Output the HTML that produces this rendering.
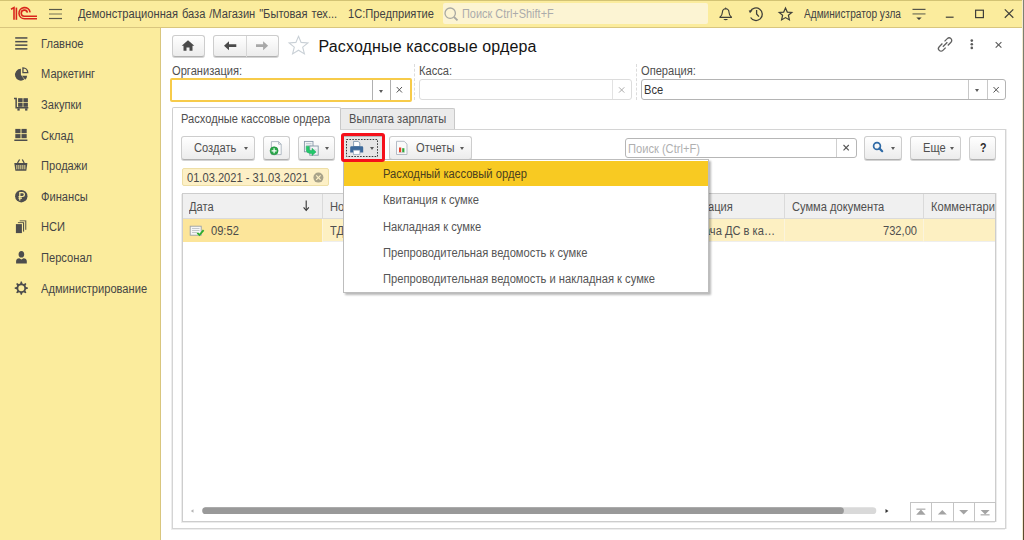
<!DOCTYPE html>
<html><head><meta charset="utf-8">
<style>
*{margin:0;padding:0;box-sizing:border-box}
html,body{width:1024px;height:540px;overflow:hidden;background:#fff;font-family:"Liberation Sans",sans-serif;font-size:11px;color:#4f4f4f}
.a{position:absolute}
.t{position:absolute;white-space:nowrap;line-height:14px;height:14px;font-size:12.5px;transform:scaleX(0.89);transform-origin:0 0}
svg{position:absolute;overflow:visible}
#hdr{position:absolute;left:0;top:0;width:1024px;height:28px;background:#fbec9d;border-bottom:1px solid #d9c67e;border-top:1px solid #d3c374}
#side{position:absolute;left:0;top:28px;width:161px;height:512px;background:#fbec9d;border-right:1px solid #d9c67e}
#redge{position:absolute;left:1022px;top:0;width:2px;height:540px;background:linear-gradient(90deg,#f4ead0 0 1px,transparent 1px),linear-gradient(#7d8274,#6f6a55 50%,#5a4a2e)}
.btn{position:absolute;border:1px solid #cdcdcd;border-bottom-color:#b0b0b0;border-radius:3px;background:linear-gradient(#ffffff,#ececec);box-shadow:0 1px 0.5px #d4d4d4}
.inp{position:absolute;border:1px solid #c4c4c4;border-radius:3px;background:#fff}
.vs{position:absolute;width:1px;background:#d4d4d4}
.dd{position:absolute;width:0;height:0;border-left:2.5px solid transparent;border-right:2.5px solid transparent;border-top:3px solid #5a5a5a}
.si{left:41px;color:#454545}
.hd{color:#424242}
.mi{left:383px;color:#555;transform:scaleX(0.895)}
</style></head><body>

<!-- ===== HEADER ===== -->
<div id="hdr"></div>
<!-- 1C logo -->
<svg style="left:0;top:0" width="40" height="28" viewBox="0 0 40 28">
  <g fill="none" stroke="#d9261c" stroke-width="1.6">
    <path d="M11 9.2 L14 7.6 L14 19.8"/>
    <path d="M16.4 7.6 L16.4 19.8"/>
    <path d="M30.1 12.3 A5.6 5.6 0 1 0 24.6 18.8 L37 18.8"/>
    <path d="M27.4 12.6 A3.1 3.1 0 1 0 24.5 16.3 L37 16.3"/>
  </g>
</svg>
<!-- hamburger -->
<svg style="left:0;top:0" width="70" height="28">
  <g stroke="#5a5a4a" stroke-width="1.2"><line x1="49" y1="9.5" x2="62" y2="9.5"/><line x1="49" y1="14" x2="62" y2="14" stroke="#8a8660"/><line x1="49" y1="18.5" x2="62" y2="18.5"/></g>
</svg>
<div class="t hd" style="left:78px;top:7.2px;word-spacing:0.9px">Демонстрационная база /Магазин "Бытовая тех...</div>
<div class="t hd" style="left:347.5px;top:7.2px">1С:Предприятие</div>
<div class="a" style="left:443px;top:3px;width:265px;height:21px;background:#fcf4d3;border-radius:2px"></div>
<svg style="left:0;top:0" width="470" height="28">
  <g fill="none" stroke="#a9a9a2" stroke-width="1.3"><circle cx="450.2" cy="13.2" r="5.2"/><line x1="454" y1="17" x2="457.5" y2="20.3" stroke-width="1.8"/></g>
</svg>
<div class="t" style="left:461.5px;top:7.2px;color:#ababab;transform:scaleX(0.875)">Поиск Ctrl+Shift+F</div>
<!-- bell -->
<svg style="left:0;top:0" width="800" height="28">
  <path d="M719.9 17.3 L731.5 17.3 Q729.1 15.2 729 12.2 Q728.9 8.9 725.7 8.7 Q722.5 8.9 722.4 12.2 Q722.3 15.2 719.9 17.3 Z" fill="none" stroke="#3f3f3a" stroke-width="1.15" stroke-linejoin="round"/>
  <path d="M723.3 18.9 L728.1 18.9 Q725.7 21.8 723.3 18.9 Z" fill="#3f3f3a"/>
  <path d="M724.6 8.8 L725.7 7.3 L726.8 8.8 Z" fill="#3f3f3a"/>
  <!-- history -->
  <g fill="none" stroke="#3f3f3a" stroke-width="1.3">
    <path d="M750.3 11.5 A6.3 6.3 0 1 1 750.6 17.5"/>
    <path d="M756.6 10 L756.6 14 L758.9 16.7"/>
  </g>
  <path d="M748.7 10.4 L752.6 10.2 L750 13.3 Z" fill="#3f3f3a"/>
  <!-- star -->
  <path d="M785.5 8 L787.3 12.1 L791.8 12.5 L788.4 15.3 L789.4 19.9 L785.5 17.6 L781.6 19.9 L782.6 15.3 L779.2 12.5 L783.7 12.1 Z" fill="none" stroke="#3f3f3a" stroke-width="1.2" stroke-linejoin="miter"/>
</svg>
<div class="t hd" style="left:804px;top:7.2px;transform:scaleX(0.81)">Администратор узла</div>
<svg style="left:0;top:0" width="1024" height="28">
  <g stroke="#55554a" stroke-width="1.2"><line x1="912.5" y1="9.4" x2="925.5" y2="9.4"/><line x1="912.5" y1="13.9" x2="925.5" y2="13.9" stroke="#8c8a66" stroke-width="1.5"/></g>
  <path d="M916.3 17.6 L921.7 17.6 L919 20 Z" fill="#3f3f3a"/>
  <line x1="945.8" y1="17.2" x2="953.6" y2="17.2" stroke="#3f3f3a" stroke-width="1.2"/>
  <rect x="975.6" y="10.2" width="7.8" height="7.4" fill="none" stroke="#3f3f3a" stroke-width="1.2"/>
  <g stroke="#3f3f3a" stroke-width="1.2"><line x1="1004.8" y1="9.4" x2="1013.3" y2="17.7"/><line x1="1013.3" y1="9.4" x2="1004.8" y2="17.7"/></g>
</svg>

<!-- ===== SIDEBAR ===== -->
<div id="side"></div>
<div id="redge"></div>
<svg style="left:0;top:0" width="40" height="300">
  <g fill="#4d4d4d">
    <!-- Главное -->
    <rect x="15.2" y="37.2" width="12.2" height="1.5"/><rect x="15.2" y="40.9" width="12.2" height="1.5"/><rect x="15.2" y="44.4" width="12.2" height="1.5"/><rect x="15.2" y="48.1" width="12.2" height="1.5"/>
    <!-- Маркетинг -->
    <path d="M20.9 74.7 L20.90 68.80 A5.9 5.9 0 1 0 24.28 79.53 Z"/>
    <path d="M22.95 72.65 L22.95 67.80 A5 5 0 0 1 27.80 72.65 Z" fill="none" stroke="#4d4d4d" stroke-width="1.3"/>
    <path d="M21.9 75.7 L27.10 75.70 A5.2 5.2 0 0 1 25.24 79.68 Z"/>
    <!-- Закупки -->
    <path d="M14 97.8 L16.9 97.8 L16.9 107 L28.3 107 L28.3 108.5 L15.4 108.5 L15.4 99.3 L14 99.3 Z"/>
    <rect x="18.1" y="98.2" width="4.5" height="4.1"/><rect x="23.4" y="98.2" width="4.5" height="4.1"/>
    <rect x="18.1" y="103" width="4.5" height="3.8"/><rect x="23.4" y="103" width="4.5" height="3.8"/>
    <rect x="17.4" y="108.3" width="2.3" height="2.3"/><rect x="25.1" y="108.3" width="2.3" height="2.3"/>
    <!-- Склад -->
    <rect x="15.3" y="128.9" width="5.2" height="4.3"/><rect x="21.5" y="128.9" width="5.2" height="4.3"/>
    <rect x="15.3" y="134.1" width="5.2" height="4.1"/><rect x="21.5" y="134.1" width="5.2" height="4.1"/>
    <rect x="14.3" y="139.5" width="13.1" height="1.5"/>
    <!-- Продажи -->
    <path d="M14.3 163 L27.4 163 L26.3 170.8 L15.4 170.8 Z"/>
    <path d="M17.5 163 L19.6 159.5 M24.2 163 L22.3 159.5" stroke="#4d4d4d" stroke-width="1.3" fill="none"/>
    <g fill="#fbec9d"><rect x="16.4" y="165" width="0.9" height="4.3"/><rect x="18.4" y="165" width="0.9" height="4.3"/><rect x="20.4" y="165" width="0.9" height="4.3"/><rect x="22.4" y="165" width="0.9" height="4.3"/><rect x="24.4" y="165" width="0.9" height="4.3"/></g>
    <!-- Финансы -->
    <circle cx="21.3" cy="196.2" r="6.2"/>
    <path d="M19.8 200.6 L19.8 192.7 L22.4 192.7 Q24.4 192.7 24.4 194.6 Q24.4 196.5 22.4 196.5 L18.5 196.5 M18.5 198.2 L22 198.2" fill="none" stroke="#fbec9d" stroke-width="1.2"/>
    <!-- НСИ -->
    <rect x="19.7" y="220.4" width="6.6" height="9.4" fill="#5f5d4e"/>
    <rect x="18.7" y="221.3" width="6.5" height="10" fill="#fbec9d"/>
    <rect x="17.9" y="222.2" width="6.2" height="9.4" fill="#55544a"/>
    <rect x="16.9" y="223.1" width="6.1" height="10" fill="#fbec9d"/>
    <rect x="15.9" y="224.1" width="6" height="9"/>
    <!-- Персонал -->
    <path d="M18.6 254.5 Q18.6 251 21.4 251 Q24.2 251 24.2 254.5 Q24.2 257.6 21.4 257.6 Q18.6 257.6 18.6 254.5 Z"/>
    <path d="M16.1 263.5 L16.1 261 Q16.3 258.6 19.3 258.3 L21.4 259.6 L23.5 258.3 Q26.6 258.6 26.8 261 L26.8 263.5 Z"/>
    <!-- Администрирование -->
    <g transform="translate(21.3 288.2)">
      <circle r="3.9" fill="none" stroke="#4d4d4d" stroke-width="1.8"/>
      <path d="M3.80 1.40 L6.60 0.60 L6.60 -0.60 L3.80 -1.40 Z M1.70 3.68 L4.24 5.09 L5.09 4.24 L3.68 1.70 Z M-1.40 3.80 L-0.60 6.60 L0.60 6.60 L1.40 3.80 Z M-3.68 1.70 L-5.09 4.24 L-4.24 5.09 L-1.70 3.68 Z M-3.80 -1.40 L-6.60 -0.60 L-6.60 0.60 L-3.80 1.40 Z M-1.70 -3.68 L-4.24 -5.09 L-5.09 -4.24 L-3.68 -1.70 Z M1.40 -3.80 L0.60 -6.60 L-0.60 -6.60 L-1.40 -3.80 Z M3.68 -1.70 L5.09 -4.24 L4.24 -5.09 L1.70 -3.68 Z" fill="#4d4d4d"/>
    </g>
  </g>
</svg>
<div class="t si" style="top:36.90px">Главное</div>
<div class="t si" style="top:67.47px">Маркетинг</div>
<div class="t si" style="top:98.05px">Закупки</div>
<div class="t si" style="top:128.62px">Склад</div>
<div class="t si" style="top:159.20px">Продажи</div>
<div class="t si" style="top:189.78px">Финансы</div>
<div class="t si" style="top:220.35px">НСИ</div>
<div class="t si" style="top:250.93px">Персонал</div>
<div class="t si" style="top:281.50px">Администрирование</div>


<!-- ===== MAIN ===== -->
<!-- home button -->
<div class="btn" style="left:172px;top:35px;width:33px;height:22px"></div>
<svg style="left:0;top:0" width="320" height="60">
  <path d="M188 40.2 L194.3 45.8 L192.5 45.8 L192.5 50.8 L189.5 50.8 L189.5 47.6 L186.5 47.6 L186.5 50.8 L183.5 50.8 L183.5 45.8 L181.7 45.8 Z" fill="#4a4a4a"/>
</svg>
<!-- back/forward -->
<div class="btn" style="left:213px;top:35px;width:66px;height:22px"></div>
<div class="vs" style="left:246px;top:36px;height:21px;background:#d6d6d6"></div>
<svg style="left:0;top:0" width="320" height="60">
  <path d="M224 45.7 L229 41.2 L229 44.3 L236.3 44.3 L236.3 47.1 L229 47.1 L229 50.2 Z" fill="#4a4a4a"/>
  <path d="M268.1 45.7 L263.1 41.2 L263.1 44.3 L256 44.3 L256 47.1 L263.1 47.1 L263.1 50.2 Z" fill="#a8a8a8"/>
  <path d="M298.5 36.3 L301.1 42.4 L307.9 42.9 L302.7 47.2 L304.4 53.9 L298.5 50.2 L292.6 53.9 L294.3 47.2 L289.1 42.9 L295.9 42.4 Z" fill="none" stroke="#c9d0d6" stroke-width="1.1"/>
</svg>
<div class="t" style="left:318.5px;top:37.5px;font-size:16px;line-height:18px;height:18px;color:#141414;letter-spacing:0.14px;transform:none">Расходные кассовые ордера</div>
<svg style="left:0;top:0" width="1024" height="60">
  <g transform="translate(945.1 44.5) rotate(-45)" fill="none" stroke="#606060" stroke-width="1.3">
    <path d="M-1.2 -2.6 L-5.7 -2.6 A2.6 2.6 0 0 0 -5.7 2.6 L-1.8 2.6"/>
    <path d="M1.8 -2.6 L5.7 -2.6 A2.6 2.6 0 0 1 5.7 2.6 L1.2 2.6"/>
    <line x1="-3.2" y1="0" x2="3.2" y2="0"/>
  </g>
  <g fill="#5a5a5a"><circle cx="971.8" cy="40.6" r="1.3"/><circle cx="971.8" cy="44.2" r="1.3"/><circle cx="971.8" cy="47.9" r="1.3"/></g>
  <g stroke="#5a5a5a" stroke-width="1.1"><line x1="995.7" y1="42.2" x2="1001.4" y2="47.7"/><line x1="1001.4" y1="42.2" x2="995.7" y2="47.7"/></g>
</svg>

<!-- labels -->
<div class="t" style="left:172px;top:63.5px">Организация:</div>
<div class="t" style="left:419px;top:63.5px">Касса:</div>
<div class="t" style="left:641px;top:63.5px">Операция:</div>
<!-- dashed separators -->
<div class="a" style="left:414px;top:64px;width:1px;height:36px;border-left:1px dashed #dcdcdc"></div>
<div class="a" style="left:636px;top:64px;width:1px;height:36px;border-left:1px dashed #dcdcdc"></div>
<!-- org input (focused) -->
<div class="a" style="left:170px;top:78px;width:242px;height:24px;border:2px solid #f7cb4a;border-radius:2px;background:#fff"></div>
<div class="vs" style="left:372px;top:80px;height:20px;background:#b0b0b0"></div>
<div class="vs" style="left:390px;top:80px;height:20px;background:#b0b0b0"></div>
<div class="dd" style="left:378.5px;top:89.5px"></div>

<!-- kassa input -->
<div class="inp" style="left:419px;top:79px;width:213px;height:21px;border-color:#dcdcdc"></div>
<div class="vs" style="left:612px;top:80px;height:19px;background:#e2e2e2"></div>
<!-- operation input -->
<div class="inp" style="left:641px;top:79px;width:365px;height:21px;border-color:#b4b4b4"></div>
<div class="vs" style="left:968px;top:80px;height:19px;background:#c8c8c8"></div>
<div class="vs" style="left:987px;top:80px;height:19px;background:#c8c8c8"></div>
<div class="dd" style="left:975.0px;top:89px"></div>
<div class="t" style="left:644px;top:82.6px;color:#333">Все</div>
<svg style="left:0;top:0" width="1024" height="110">
  <g stroke="#555" stroke-width="1"><line x1="396.7" y1="87" x2="402" y2="92.5"/><line x1="402" y1="87" x2="396.7" y2="92.5"/></g>
  <g stroke="#a8a8a8" stroke-width="0.95"><line x1="619" y1="87.3" x2="624.3" y2="92.6"/><line x1="624.3" y1="87.3" x2="619" y2="92.6"/></g>
  <g stroke="#555" stroke-width="1"><line x1="993.5" y1="87" x2="998.8" y2="92.5"/><line x1="998.8" y1="87" x2="993.5" y2="92.5"/></g>
</svg>

<!-- tabs -->
<div class="a" style="left:172px;top:129px;width:834px;height:400px;border:1px solid #d4d4d4;box-shadow:-1px 1px 0 #ededed,1px 0 0 #ededed"></div>
<div class="a" style="left:172px;top:107px;width:169px;height:23px;border:1px solid #cfcfcf;border-bottom:none;border-radius:2px 2px 0 0;background:#fff"></div>
<div class="t" style="left:181px;top:112px">Расходные кассовые ордера</div>
<div class="a" style="left:340px;top:108px;width:115px;height:21px;border:1px solid #c8c8c8;border-bottom:none;border-radius:2px 2px 0 0;background:#ebebeb"></div>
<div class="t" style="left:349.4px;top:112px">Выплата зарплаты</div>


<!-- ===== TOOLBAR ===== -->
<div class="btn" style="left:181px;top:136px;width:74px;height:24px"></div>
<div class="t" style="left:194.2px;top:141.3px">Создать</div>
<div class="dd" style="left:243.5px;top:147px"></div>
<div class="btn" style="left:263px;top:136px;width:27px;height:24px"></div>

<div class="btn" style="left:298px;top:136px;width:37px;height:24px"></div>
<div class="dd" style="left:324.5px;top:147px"></div>
<!-- print pressed + red frame -->

<div class="a" style="left:344px;top:136px;width:38px;height:24px;background:#e6e6e6;border-top:1px solid #b9b9b9"></div>
<svg style="left:0;top:0" width="400" height="170"><rect x="346.5" y="139.5" width="31" height="17" fill="none" stroke="#3a3a3a" stroke-width="1" stroke-dasharray="1.6 1.3"/></svg>
<div class="dd" style="left:370.0px;top:147px"></div>
<div class="btn" style="left:389px;top:136px;width:83px;height:24px"></div>
<div class="t" style="left:416px;top:141.3px">Отчеты</div>
<div class="dd" style="left:460.0px;top:147px"></div>
<svg style="left:0;top:0" width="1024" height="170">
  <!-- add doc -->
  <path d="M271.4 141.6 L278.6 141.6 L281.2 144.2 L281.2 154.6 L271.4 154.6 Z" fill="#fbfbfb" stroke="#a9b4c0" stroke-width="0.9"/>
  <path d="M278.6 141.6 L278.6 144.2 L281.2 144.2" fill="none" stroke="#a9b4c0" stroke-width="0.9"/>
  <circle cx="274.1" cy="150.8" r="4" fill="#2aa84a" stroke="#1f8c3a" stroke-width="0.6"/>
  <path d="M274.1 148.3 L274.1 153.3 M271.6 150.8 L276.6 150.8" stroke="#fff" stroke-width="1.2"/>
  <!-- based on / copy -->
  <rect x="304.4" y="141.4" width="8.6" height="10.4" fill="#f2f4f6" stroke="#8797a8" stroke-width="0.9"/>
  <g stroke="#b5c0cb" stroke-width="0.7"><line x1="306" y1="143.5" x2="311.5" y2="143.5"/><line x1="306" y1="145.3" x2="311.5" y2="145.3"/></g>
  <rect x="309.8" y="146" width="8.4" height="9.2" fill="#f2f4f6" stroke="#8797a8" stroke-width="0.9"/>
  <g stroke="#b5c0cb" stroke-width="0.7"><line x1="311.5" y1="150" x2="316.5" y2="150"/><line x1="311.5" y1="152" x2="316.5" y2="152"/></g>
  <path d="M306.2 146.2 L309.2 146.2 L309.2 149.2 Q309.2 150.6 310.8 150.6 L312 150.6 L312 148.2 L316 152 L312 155.6 L312 153.4 L310.2 153.4 Q306.2 153.4 306.2 149.6 Z" fill="#23c86c" stroke="#1aa856" stroke-width="0.5"/>
  <!-- printer -->
  <path d="M353.6 141.4 L358.2 141.4 L359.8 143 L359.8 146.6 L353.6 146.6 Z" fill="#fff" stroke="#6f8aa6" stroke-width="0.8"/>
  <path d="M350.2 147.4 Q350.2 146.3 351.3 146.3 L362.1 146.3 Q363.2 146.3 363.2 147.4 L363.2 152.4 L359.9 152.4 L359.9 150.2 L353.5 150.2 L353.5 152.4 L350.2 152.4 Z" fill="#3d6a9b"/>
  <rect x="353.5" y="150.2" width="6.4" height="4.1" fill="#fff" stroke="#8aa2bb" stroke-width="0.7"/>
  <!-- report -->
  <path d="M396.5 141.3 L404.2 141.3 L407 144.1 L407 154.5 L396.5 154.5 Z" fill="#fafafa" stroke="#b4bcc6" stroke-width="1"/>
  <rect x="399" y="147.5" width="2.2" height="5" fill="#e8412c"/>
  <rect x="401.6" y="149.2" width="2" height="3.3" fill="#e8412c" opacity="0"/>
  <rect x="402.2" y="148.2" width="2.2" height="4.3" fill="#2fa83c"/>
  <rect x="398.6" y="152.3" width="6" height="0.8" fill="#c9c9c9"/>
</svg>
<!-- search -->
<div class="inp" style="left:624.5px;top:138px;width:232px;height:20px;border-color:#b6b6b6"></div>
<div class="vs" style="left:836px;top:139px;height:18px;background:#cfcfcf"></div>
<div class="t" style="left:627.5px;top:141.8px;color:#b0b0b0">Поиск (Ctrl+F)</div>
<svg style="left:0;top:0" width="1024" height="170">
  <g stroke="#555" stroke-width="1.1"><line x1="843.5" y1="145" x2="848.8" y2="150.3"/><line x1="848.8" y1="145" x2="843.5" y2="150.3"/></g>
</svg>
<div class="btn" style="left:864px;top:136px;width:38px;height:24px"></div>
<svg style="left:0;top:0" width="1024" height="170">
  <circle cx="877" cy="146" r="3.4" fill="none" stroke="#2f6aa6" stroke-width="1.7"/>
  <line x1="879.4" y1="148.4" x2="882.2" y2="151.2" stroke="#2f6aa6" stroke-width="2.2" stroke-linecap="round"/>
</svg>
<div class="dd" style="left:890.5px;top:147px"></div>
<div class="btn" style="left:910px;top:136px;width:51px;height:24px"></div>
<div class="t" style="left:922.6px;top:141.3px">Еще</div>
<div class="dd" style="left:949.5px;top:147px"></div>
<div class="btn" style="left:969px;top:136px;width:27px;height:24px"></div>
<div class="t" style="left:980.2px;top:140.6px;color:#2a2a2a;font-weight:bold;font-size:12.5px;transform:scaleX(0.85)">?</div>

<!-- date chip -->
<div class="a" style="left:182px;top:168px;width:147px;height:18px;background:#fdf0c6;border:1px solid #eedfa6;border-radius:2px"></div>
<div class="t" style="left:187px;top:171px;color:#4a4a4a">01.03.2021 - 31.03.2021</div>
<svg style="left:0;top:0" width="1024" height="200">
  <circle cx="318.4" cy="177.6" r="5" fill="#a9a38a"/>
  <g stroke="#fdf0c6" stroke-width="1.2"><line x1="316.2" y1="175.4" x2="320.6" y2="179.8"/><line x1="320.6" y1="175.4" x2="316.2" y2="179.8"/></g>
</svg>

<!-- ===== TABLE ===== -->
<div class="a" style="left:182px;top:193px;width:814px;height:329px;border:1px solid #cdcdcd;box-shadow:-1px 1px 0 #ececec,1px 0 0 #ececec"></div>
<div class="a" style="left:183px;top:194px;width:812px;height:25px;background:#f0f0f0;border-bottom:1px solid #dadada"></div>
<div class="vs" style="left:322px;top:194px;height:24px;background:#dadada"></div>
<div class="vs" style="left:784px;top:194px;height:24px;background:#dadada"></div>
<div class="vs" style="left:923px;top:194px;height:24px;background:#dadada"></div>
<div class="t" style="left:189.3px;top:199.5px">Дата</div>
<svg style="left:0;top:0" width="1024" height="250">
  <path d="M306.2 200.5 L306.2 210" stroke="#333" stroke-width="1.1"/>
  <path d="M303.6 207.3 L306.2 210.5 L308.8 207.3" fill="none" stroke="#333" stroke-width="1.1"/>
</svg>
<div class="t" style="left:329.5px;top:199.5px">Номер</div>
<div class="t" style="left:681px;top:199.5px">Операция</div>
<div class="t" style="left:792.2px;top:199.5px">Сумма документа</div>
<div class="t" style="left:931.4px;top:199.5px;width:72px;overflow:hidden">Комментарий</div>
<!-- row -->
<div class="a" style="left:183px;top:219px;width:812px;height:23px;background:#fdf0c2;border-bottom:1px solid #eeeeee"></div>
<div class="a" style="left:183px;top:219px;width:139px;height:23px;background:#fce59a"></div>
<div class="a" style="left:322px;top:219px;width:1px;height:23px;background:#fbf4dc"></div>
<div class="a" style="left:784px;top:219px;width:1px;height:23px;background:#fbf4dc"></div>
<div class="a" style="left:923px;top:219px;width:1px;height:23px;background:#fbf4dc"></div>
<svg style="left:0;top:0" width="1024" height="250">
  <rect x="190.2" y="226.2" width="11" height="9" fill="#f6f6f6" stroke="#9aa0a6" stroke-width="0.9"/>
  <g stroke="#b8bcc0" stroke-width="0.8"><line x1="192" y1="228.5" x2="199.5" y2="228.5"/><line x1="192" y1="230.5" x2="199.5" y2="230.5"/><line x1="192" y1="232.5" x2="197" y2="232.5"/></g>
  <path d="M197.3 232.8 L199.5 235 L203.6 230.2" fill="none" stroke="#2cad2c" stroke-width="1.8"/>
</svg>
<div class="t" style="left:211px;top:224.3px;color:#4a4a4a">09:52</div>
<div class="t" style="left:329.5px;top:224.3px">ТД00-000001</div>
<div class="t" style="left:682.2px;top:224.3px">Выдача ДС в ка…</div>
<div class="t" style="left:882.5px;top:224.3px">732,00</div>

<!-- scroll bar -->
<svg style="left:0;top:0" width="1024" height="540">
  <path d="M190.8 511 L193.5 509.2 L193.5 512.8 Z" fill="#b5b5b5"/>
  <rect x="202.3" y="507.3" width="674" height="6.8" rx="3.4" fill="#d9d9d9"/>
  <rect x="202.3" y="507.3" width="641.6" height="6.8" rx="3.4" fill="#999"/>
  <path d="M885.5 509 L888.5 511 L885.5 513 Z" fill="#333"/>
</svg>
<div class="a" style="left:910px;top:502px;width:86px;height:19px;border:1px solid #c4c4c4;border-bottom:none;background:#fff"></div>
<div class="vs" style="left:931px;top:503px;height:18px;background:#c4c4c4"></div>
<div class="vs" style="left:953px;top:503px;height:18px;background:#c4c4c4"></div>
<div class="vs" style="left:974px;top:503px;height:18px;background:#c4c4c4"></div>
<svg style="left:0;top:0" width="1024" height="540">
  <g fill="#a3a3a3">
    <rect x="916.4" y="508.6" width="9" height="1.1"/><path d="M916.2 514.8 L920.9 509.6 L925.6 514.8 Z"/>
    <path d="M937.8 514.6 L942.3 510 L946.8 514.6 Z"/>
    <path d="M959.2 510 L963.7 514.6 L968.2 510 Z"/>
    <path d="M980.6 510 L985.1 514.4 L989.6 510 Z"/><rect x="980.6" y="514.3" width="9" height="1.1"/>
  </g>
</svg>

<!-- ===== DROPDOWN MENU ===== -->
<div class="a" style="left:343px;top:159px;width:366px;height:134px;background:#fff;border:1px solid #bdbdbd;box-shadow:2px 2px 2px rgba(0,0,0,0.28)"></div>
<div class="a" style="left:344px;top:160.5px;width:364px;height:25.5px;background:#f8ca22"></div>
<div class="t mi" style="top:167px;color:#4a4020">Расходный кассовый ордер</div>
<div class="t mi" style="top:193px">Квитанция к сумке</div>
<div class="t mi" style="top:219.5px">Накладная к сумке</div>
<div class="t mi" style="top:245.5px">Препроводительная ведомость к сумке</div>
<div class="t mi" style="top:272px">Препроводительная ведомость и накладная к сумке</div>

<div class="a" style="left:341px;top:133px;width:44px;height:29px;border:3px solid #f5101a;border-radius:3px"></div>
</body></html>
